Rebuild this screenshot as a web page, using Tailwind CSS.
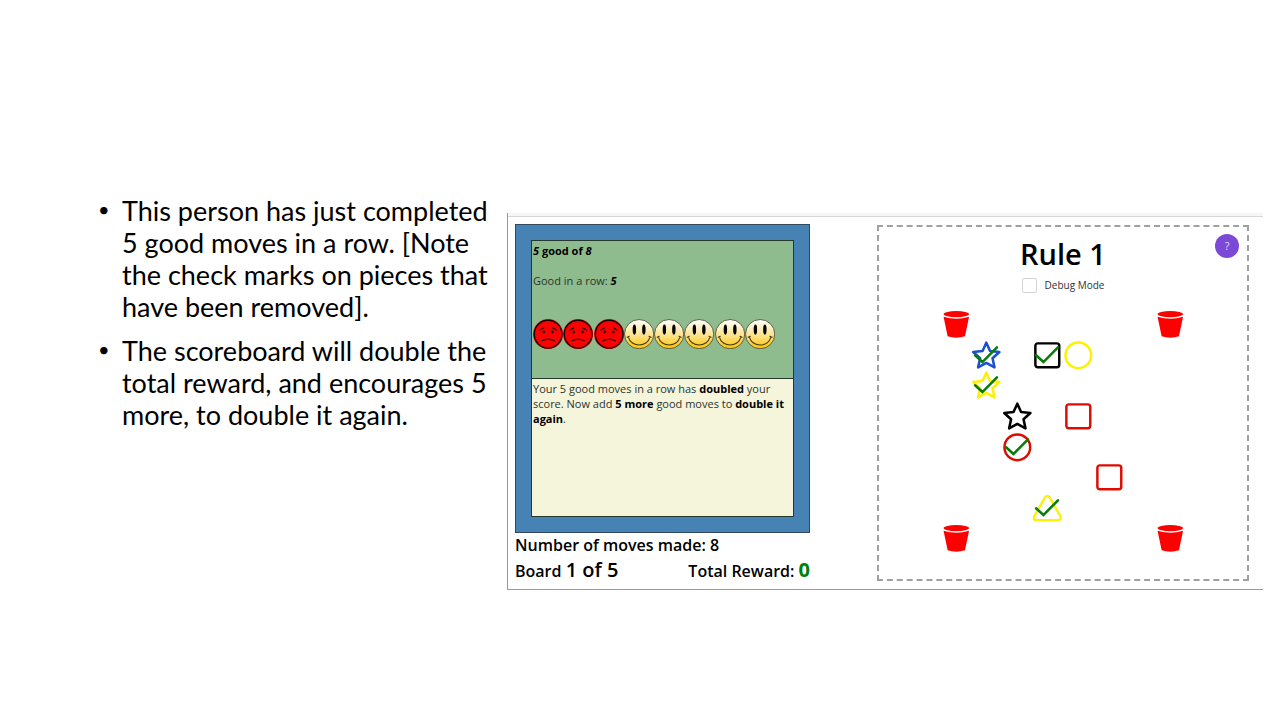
<!DOCTYPE html>
<html lang="en">
<head>
<meta charset="utf-8">
<title>Rule game</title>
<meta name="viewport" content="width=device-width, initial-scale=1">
<script src="https://cdn.jsdelivr.net/npm/@tailwindcss/browser@4"></script>
</head>
<body class="bg-white text-black font-['Open_Sans',sans-serif]">
<svg class="absolute size-0" aria-hidden="true">
  <defs>
    <linearGradient id="sun" x1="0" y1="0" x2="0" y2="1"><stop offset="0.05" stop-color="#fffdf5"/><stop offset="0.55" stop-color="#fde28a"/><stop offset="1" stop-color="#ffc400"/></linearGradient>
    <symbol id="sad" viewBox="0 0 30 30">
      <circle cx="15" cy="15" r="15" fill="#e8201c"/>
      <circle cx="15" cy="15" r="13.7" fill="#f00" stroke="#180000" stroke-width="1.4"/>
      <path d="M6.8 11L10.6 8.8M23.2 11L19.4 8.8M9 21.6Q15 18.2 21 21.6" fill="none" stroke="#200" stroke-width="1.2" stroke-linecap="round"/>
      <circle cx="10.7" cy="12.8" r="1.3" fill="#200"/><circle cx="19.3" cy="12.8" r="1.3" fill="#200"/>
    </symbol>
    <symbol id="happy" viewBox="0 0 30 30">
      <circle cx="15" cy="15" r="14.5" fill="url(#sun)" stroke="#4c5340" stroke-width="0.9"/>
      <ellipse cx="10.3" cy="10.5" rx="1.7" ry="5"/><ellipse cx="19.7" cy="10.5" rx="1.7" ry="5"/>
      <path d="M4.2 17.6C7 28.5 23 28.5 25.8 17.6M3.2 18.2L5.2 17.2M26.8 18.2L24.8 17.2" fill="none" stroke="#4a3c18" stroke-width="1.1" stroke-linecap="round"/>
    </symbol>
    <symbol id="bucket" viewBox="0 0 30 30">
      <ellipse cx="15" cy="5" rx="12.5" ry="3" fill="#f00"/>
      <path d="M2.5 7.6Q15 11.4 27.5 7.6L23.5 26.8Q15 29.4 6.5 26.8Z" fill="#f00"/>
    </symbol>
    <symbol id="star" viewBox="0 0 30 30"><path d="M15 2.6L18.7 10.8L27.8 11.8L21.1 17.9L23 26.8L15 22.5L7 26.8L8.9 17.9L2.2 11.8L11.3 10.8Z" fill="none" stroke="currentColor" stroke-width="2.5" stroke-linejoin="round"/></symbol>
    <symbol id="square" viewBox="0 0 30 30"><rect x="3.3" y="3.3" width="23.4" height="23.4" rx="2.4" fill="none" stroke="currentColor" stroke-width="2.4"/></symbol>
    <symbol id="circle" viewBox="0 0 30 30"><circle cx="15" cy="15" r="12.6" fill="none" stroke="currentColor" stroke-width="2.4"/></symbol>
    <symbol id="triangle" viewBox="0 0 30 30"><path d="M12.7 4.4Q15 1.2 17.3 4.4L27.8 22.8Q29.2 26.3 25.5 26.6H4.5Q0.8 26.3 2.2 22.8Z" fill="none" stroke="currentColor" stroke-width="2.3" stroke-linejoin="round"/></symbol>
    <symbol id="tick" viewBox="0 0 30 30"><path d="M4 15L11.2 21.6L25.4 7.2" fill="none" stroke="#067d06" stroke-width="2.5" stroke-linecap="round" stroke-linejoin="miter"/></symbol>
  </defs>
</svg>
<main class="flex items-start pr-[17px]">
  <section class="w-[507px] shrink-0 pt-[195px] pl-[122px] font-['Lato',sans-serif] text-[27px] leading-8">
    <ul class="list-none space-y-3 whitespace-nowrap">
      <li class="relative"><span class="absolute -left-6 text-xl leading-7">•</span>This person has just completed<br>5 good moves in a row. [Note<br>the check marks on pieces that<br>have been removed].</li>
      <li class="relative"><span class="absolute -left-6 text-xl leading-7">•</span>The scoreboard will double the<br>total reward, and encourages 5<br>more, to double it again.</li>
    </ul>
  </section>
  <section class="mt-[213px] grow border-b border-l border-[#999]">
    <div class="h-[4px] border-b border-[#d6d8d8] bg-[#f7f7f7]"></div>
    <div class="flex items-start justify-between pt-[7px] pr-[14px] pb-[5px] pl-[7px]">
      <div class="w-[295px] shrink-0">
        <div class="border border-[#31495e] bg-[#4682b4] p-[15px]">
          <div class="border border-[#26382b] text-[11px] leading-[15px] text-[#2b332b]">
            <div class="h-[138px] border-b border-[#26382b] bg-[#8fbc8f] px-px pt-[2px]">
              <p class="font-bold text-black"><i>5</i> good of <i>8</i></p>
              <p class="mt-[15px]">Good in a row: <b class="text-black italic">5</b></p>
              <div class="mt-[31px] flex w-[242px] *:w-[30px] *:flex-1">
                <svg viewBox="0 0 30 30"><use href="#sad"/></svg><svg viewBox="0 0 30 30"><use href="#sad"/></svg><svg viewBox="0 0 30 30"><use href="#sad"/></svg><svg viewBox="0 0 30 30"><use href="#happy"/></svg><svg viewBox="0 0 30 30"><use href="#happy"/></svg><svg viewBox="0 0 30 30"><use href="#happy"/></svg><svg viewBox="0 0 30 30"><use href="#happy"/></svg><svg viewBox="0 0 30 30"><use href="#happy"/></svg>
              </div>
            </div>
            <p class="h-[137px] bg-[#f5f5dc] px-px pt-[2px]">Your 5 good moves in a row has <b class="text-black">doubled</b> your<br>score. Now add <b class="text-black">5 more</b> good moves to <b class="text-black">double it</b><br><b class="text-black">again</b>.</p>
          </div>
        </div>
        <p class="text-base leading-6 font-semibold">Number of moves made: 8</p>
        <p class="flex items-baseline justify-between text-base leading-[26px] font-semibold"><span>Board <span class="text-xl leading-[26px]">1 of 5</span></span><span>Total Reward: <span class="text-xl leading-[26px] font-bold text-[#008000]">0</span></span></p>
      </div>
      <div class="relative mt-px flex h-[356px] w-[372px] flex-col items-center border-2 border-dashed border-[#a0a0a0]">
        <button type="button" aria-label="Help" class="absolute top-[7px] right-2 size-6 rounded-full bg-[#7b48d8] text-[11px] text-[#e8dcfa]">?</button>
        <h1 class="mt-[7px] text-[29px] leading-10 font-semibold">Rule 1</h1>
        <label class="mt-[3px] flex items-center gap-2 text-[10px] leading-4 text-[#333]"><input type="checkbox" class="size-[15px] appearance-none rounded-xs border border-[#d4d4d4]">Debug Mode</label>
        <div class="mt-4 grid w-[245px] grid-cols-8 grid-rows-8 *:col-start-1 *:row-start-1 *:aspect-square">
          <svg viewBox="0 0 30 30"><use href="#bucket"/></svg>
          <svg class="col-start-8!" viewBox="0 0 30 30"><use href="#bucket"/></svg>
          <svg class="col-start-2! row-start-2! text-[#1a4fd0]" viewBox="0 0 30 30"><use href="#star"/><use href="#tick"/></svg>
          <svg class="col-start-4! row-start-2!" viewBox="0 0 30 30"><use href="#square"/><use href="#tick"/></svg>
          <svg class="col-start-5! row-start-2! text-[#fff000]" viewBox="0 0 30 30"><use href="#circle"/></svg>
          <svg class="col-start-2! row-start-3! text-[#fff000]" viewBox="0 0 30 30"><use href="#star"/><use href="#tick"/></svg>
          <svg class="col-start-3! row-start-4!" viewBox="0 0 30 30"><use href="#star"/></svg>
          <svg class="col-start-5! row-start-4! text-[#dc0c00]" viewBox="0 0 30 30"><use href="#square"/></svg>
          <svg class="col-start-3! row-start-5! text-[#dc0c00]" viewBox="0 0 30 30"><use href="#circle"/><use href="#tick"/></svg>
          <svg class="col-start-6! row-start-6! text-[#dc0c00]" viewBox="0 0 30 30"><use href="#square"/></svg>
          <svg class="col-start-4! row-start-7! text-[#fff000]" viewBox="0 0 30 30"><use href="#triangle"/><use href="#tick"/></svg>
          <svg class="row-start-8!" viewBox="0 0 30 30"><use href="#bucket"/></svg>
          <svg class="col-start-8! row-start-8!" viewBox="0 0 30 30"><use href="#bucket"/></svg>
        </div>
      </div>
    </div>
  </section>
</main>
</body>
</html>
